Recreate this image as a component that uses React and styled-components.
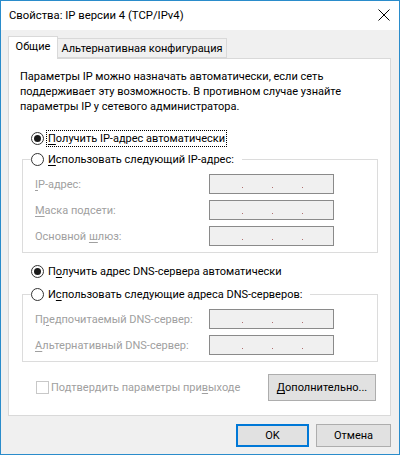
import React from 'react';
import styled, { createGlobalStyle } from 'styled-components';

const Global = createGlobalStyle`
  html, body { margin: 0; padding: 0; background: #fff; }
  body { font-family: Roboto, "Liberation Sans", sans-serif; font-size: 11px; color: #000; }
  * { box-sizing: border-box; }
`;

const Window = styled.div`
  width: 400px;
  height: 455px;
  border: 1px solid #2a8ccb;
  background: #f0f0f0;
  display: flex;
  flex-direction: column;
`;

const TitleBar = styled.div`
  height: 29px;
  background: #fff;
  display: flex;
  align-items: center;
  justify-content: space-between;
  padding: 0 8px 1px 8px;
`;

const Title = styled.span`
  font-size: 11.3px;
`;

const Close = styled.svg`
  width: 12px;
  height: 12px;
  margin-right: 1px;
`;

const Body = styled.div`
  flex: 1;
  display: flex;
  flex-direction: column;
  padding: 6px 8px 0 7px;
`;

const Tabs = styled.div`
  display: flex;
  align-items: flex-end;
  height: 23px;
  position: relative;
  z-index: 1;
  margin-bottom: -1px;
`;

const Tab = styled.div`
  height: ${p => (p.$active ? 23 : 20)}px;
  width: ${p => p.$w}px;
  margin-bottom: ${p => (p.$active ? 0 : 1)}px;
  border: 1px solid #d9d9d9;
  border-bottom: ${p => (p.$active ? 'none' : '1px solid #d9d9d9')};
  border-left: ${p => (p.$first ? '1px solid #d9d9d9' : 'none')};
  background: ${p => (p.$active ? '#fff' : '#f0f0f0')};
  display: flex;
  align-items: center;
  justify-content: center;
  padding-bottom: ${p => (p.$active ? 3 : 0)}px;
  white-space: nowrap;
`;

const Panel = styled.div`
  height: 358px;
  background: #fff;
  border: 1px solid #d9d9d9;
  padding: 10px 12px 0 11px;
  display: flex;
  flex-direction: column;
`;

const Desc = styled.p`
  margin: 0;
  line-height: 15px;
  white-space: pre-line;
`;

const RadioRow = styled.div`
  display: flex;
  align-items: center;
  height: 17px;
  margin: ${p => p.$mt || 0}px 0 0 ${p => p.$ml || 0}px;
  white-space: nowrap;
`;

const RadioCircle = styled.span`
  width: 13px;
  height: 13px;
  border-radius: 50%;
  border: 1px solid #333;
  background: #fff;
  display: flex;
  align-items: center;
  justify-content: center;
  margin-right: 2px;
  flex: none;
  &::after {
    content: '';
    width: 7px;
    height: 7px;
    border-radius: 50%;
    background: ${p => (p.$checked ? '#1a1a1a' : 'transparent')};
  }
`;

const RadioLabel = styled.span`
  padding: 0 1px;
  line-height: 15px;
  border: 1px dotted ${p => (p.$focus ? '#000' : 'transparent')};
`;

const Group = styled.fieldset`
  margin: ${p => p.$mt}px 0 0 2px;
  padding: 0;
  border: 1px solid #dcdcdc;
  min-width: 0;
`;

const Legend = styled.legend`
  margin-left: 8px;
  padding: 0 6px 0 0;
`;

const Fields = styled.div`
  display: grid;
  grid-template-columns: 174px 125px;
  row-gap: 6px;
  padding: 6px 0 6px 12px;
  align-items: center;
`;

const FieldLabel = styled.span`
  color: #a0a0a0;
  white-space: nowrap;
`;

const IpBox = styled.div`
  height: 20px;
  border: 1px solid #8a8a8a;
  background: #f0f0f0;
  display: grid;
  grid-template-columns: 33px 30px 30px 1fr;
  align-items: end;
  padding-bottom: 5px;
`;

const IpDot = styled.span`
  justify-self: end;
  width: 1px;
  height: 1px;
  background: #b07070;
`;

const BottomRow = styled.div`
  display: flex;
  align-items: center;
  justify-content: space-between;
  margin-top: 11px;
  height: 28px;
`;

const Check = styled.label`
  display: flex;
  align-items: center;
  margin-left: 16px;
  color: #a0a0a0;
  white-space: nowrap;
`;

const CheckBox = styled.span`
  width: 13px;
  height: 13px;
  border: 1px solid #c8c8c8;
  background: #fff;
  margin-right: 2px;
`;

const Button = styled.button`
  font: inherit;
  color: #000;
  height: ${p => p.$h || 23}px;
  width: ${p => p.$w}px;
  background: #e1e1e1;
  border: ${p => (p.$default ? '2px solid #0078d7' : '1px solid #adadad')};
  padding: 0;
  display: flex;
  align-items: center;
  justify-content: center;
  margin-right: ${p => p.$mr || 0}px;
  white-space: nowrap;
`;

const Footer = styled.div`
  display: flex;
  justify-content: flex-end;
  gap: 7px;
  margin-top: 8px;
`;

const U = styled.span`
  text-decoration: underline;
  text-underline-offset: 2px;
`;

function Radio({ checked, focus, children, mt, ml }) {
  return (
    <RadioRow $mt={mt} $ml={ml}>
      <RadioCircle $checked={checked} />
      <RadioLabel $focus={focus}>{children}</RadioLabel>
    </RadioRow>
  );
}

function IpField() {
  return (
    <IpBox>
      <IpDot />
      <IpDot />
      <IpDot />
    </IpBox>
  );
}

export default function App() {
  return (
    <>
      <Global />
      <Window>
        <TitleBar>
          <Title>Свойства: IP версии 4 (TCP/IPv4)</Title>
          <Close viewBox="0 0 12 12">
            <path d="M0.5 0.5 L11.5 11.5 M11.5 0.5 L0.5 11.5" stroke="#000" strokeWidth="1" fill="none" />
          </Close>
        </TitleBar>
        <Body>
          <Tabs>
            <Tab $active $first $w={50}>Общие</Tab>
            <Tab $w={169}>Альтернативная конфигурация</Tab>
          </Tabs>
          <Panel>
            <Desc>
              {'Параметры IP можно назначать автоматически, если сеть\nподдерживает эту возможность. В противном случае узнайте\nпараметры IP у сетевого администратора.'}
            </Desc>
            <Radio checked focus mt={16} ml={11}>
              <U>П</U>олучить IP-адрес автоматически
            </Radio>
            <Group $mt={4}>
              <Legend>
                <Radio>
                  <U>И</U>спользовать следующий IP-адрес:
                </Radio>
              </Legend>
              <Fields>
                <FieldLabel><U>I</U>P-адрес:</FieldLabel>
                <IpField />
                <FieldLabel><U>М</U>аска подсети:</FieldLabel>
                <IpField />
                <FieldLabel>Основной <U>ш</U>люз:</FieldLabel>
                <IpField />
              </Fields>
            </Group>
            <Radio checked mt={10} ml={11}>
              П<U>о</U>лучить адрес DNS-сервера автоматически
            </Radio>
            <Group $mt={6}>
              <Legend>
                <Radio>
                  И<U>с</U>пользовать следующие адреса DNS-серверов:
                </Radio>
              </Legend>
              <Fields>
                <FieldLabel>П<U>р</U>едпочитаемый DNS-сервер:</FieldLabel>
                <IpField />
                <FieldLabel><U>А</U>льтернативный DNS-сервер:</FieldLabel>
                <IpField />
              </Fields>
            </Group>
            <BottomRow>
              <Check>
                <CheckBox />
                Подтвердить параметры при <U>в</U>ыходе
              </Check>
              <Button $w={108} $h={27} $mr={2}>
                <U>Д</U>ополнительно...
              </Button>
            </BottomRow>
          </Panel>
          <Footer>
            <Button $default $w={73}>OK</Button>
            <Button $w={75}>Отмена</Button>
          </Footer>
        </Body>
      </Window>
    </>
  );
}
